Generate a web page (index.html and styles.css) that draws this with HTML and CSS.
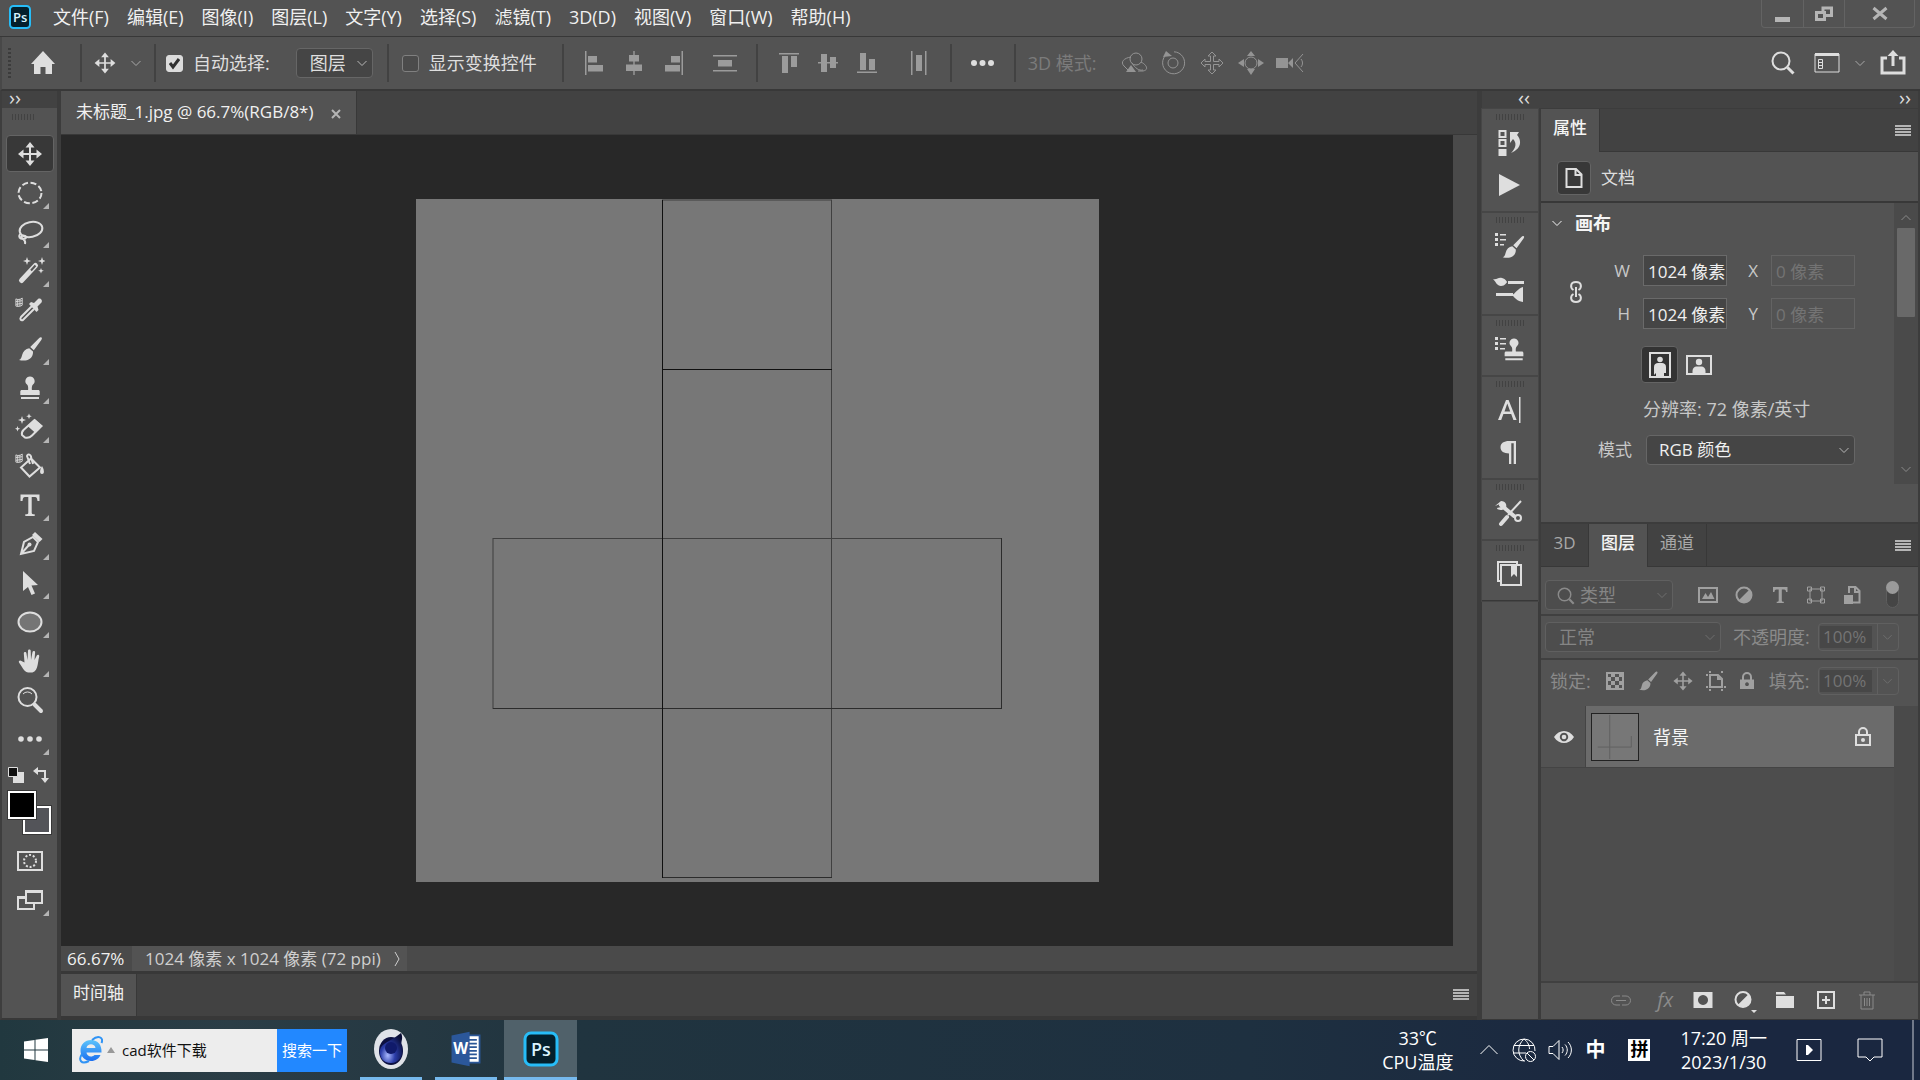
FILE: index.html
```html
<!DOCTYPE html>
<html lang="zh-CN">
<head>
<meta charset="utf-8">
<title>未标题_1.jpg @ 66.7%(RGB/8*)</title>
<link rel="stylesheet" href="styles.css">
</head>
<body>
<svg class="sprite" aria-hidden="true">
  <symbol id="move" viewBox="0 0 30 30"><path class="ln" d="M15 6v18M6 15h18"/><path d="M15 3l4.500 5.500h-9zM15 27l4.500-5.500h-9zM3 15l5.500-4.500v9zM27 15l-5.500-4.500v9z"/></symbol>
  <symbol id="down" viewBox="0 0 12 12"><path class="th" d="M1.500 4l4.500 4.500 4.500-4.500"/></symbol>
  <symbol id="brush" viewBox="0 0 30 30"><path d="M26.500 3.500c.8.500.3 1.700-.2 2.500l-7.500 10.300-3.600-3.200L24 4.200c.8-.8 1.800-1.200 2.500-.7zM14.200 14.200l3.800 3.400c.4 4.200-2.500 7.900-6.200 8.700-2.600.6-5.800.2-7.800-.3 2.200-.9 2.500-2.400 3.200-5.200.8-3.400 3.400-6 7-6.600z"/></symbol>
  <symbol id="stamp" viewBox="0 0 30 30"><path d="M15 3.500a4.600 4.600 0 0 0-3 8.100c1.300 1.300 1.300 3.400 1.100 5.400H7c-1.200 0-1.700.7-1.700 1.600V22h19.400v-3.400c0-.9-.5-1.600-1.700-1.600h-6.100c-.2-2-.2-4.100 1.100-5.400a4.600 4.600 0 0 0-3-8.100zM6 24h18v2H6z"/></symbol>
  <symbol id="menu" viewBox="0 0 16 12"><path d="M0 0h16v2H0zM0 3h16v2H0zM0 6h16v2H0zM0 9h16v2H0z"/></symbol>
  <symbol id="mag" viewBox="0 0 30 30"><circle class="ln" cx="13" cy="13" r="8.500"/><path class="ln3" d="M19.500 19.500l6 6"/></symbol>
  <symbol id="lock" viewBox="0 0 20 20"><path class="ln" d="M6 9V6a4 4 0 0 1 8 0v3"/><path fill-rule="evenodd" d="M3 8.500h14V18H3zM10 11.300a1.900 1.900 0 1 0 .01 0z"/></symbol>
  <symbol id="half" viewBox="0 0 20 20"><circle class="ln" cx="10" cy="10" r="7.500"/><path d="M15.500 4.500A7.800 7.800 0 0 1 4.500 15.500z"/></symbol>
  <symbol id="cube" viewBox="0 0 10 12"><path class="th" d="M1 2c2 1 5 1 7-1v8c-2 1.500-5 1.500-7 1zM1 5l7-1M1 8l7-1M3 2.500v8M5.500 2v8"/></symbol>
</svg>

<main class="app">
  <header class="menubar">
    <svg class="logo" viewBox="0 0 22 24"><rect x="1" y="1" width="20" height="22" rx="3.500"/><text x="4" y="17">Ps</text></svg>
    <nav class="menus">
      <button>文件(F)</button><button>编辑(E)</button><button>图像(I)</button><button>图层(L)</button><button>文字(Y)</button><button>选择(S)</button><button>滤镜(T)</button><button>3D(D)</button><button>视图(V)</button><button>窗口(W)</button><button>帮助(H)</button>
    </nav>
    <div class="winbtns">
      <button class="w1" aria-label="最小化"><svg viewBox="0 0 20 20"><path d="M2 13h15v5H2z"/></svg></button>
      <button class="w2" aria-label="还原"><svg viewBox="0 0 20 20"><path class="ln3" d="M2.500 8.500h8v7h-8zM9 8V4h8.500v7.500H12"/></svg></button>
      <button class="w3" aria-label="关闭"><svg viewBox="0 0 20 20"><path class="ln3" d="M3.500 4l13 11M16.500 4l-13 11"/></svg></button>
    </div>
  </header>

  <div class="options">
    <i class="vgrip"></i>
    <button class="home" aria-label="主页"><svg viewBox="0 0 26 26"><path d="M13 1L1 14h3v10h6.500v-7h5v7H22V14h3z"/></svg></button>
    <i class="sep"></i>
    <button class="curtool" aria-label="移动工具"><svg class="i26"><use href="#move"/></svg><svg class="i12 dim"><use href="#down"/></svg></button>
    <i class="sep"></i>
    <label class="opt o1"><input type="checkbox" class="cb" checked>自动选择:</label>
    <select class="sel lay" aria-label="自动选择"><option>图层</option></select>
    <i class="sep"></i>
    <label class="opt o2"><input type="checkbox" class="cb">显示变换控件</label>
    <i class="sep"></i>
    <div class="aligns">
      <svg viewBox="0 0 24 24"><path d="M2 0h1.500v24H2zM5 5h9v6.500H5zM5 14h15v6.500H5z"/></svg>
      <svg viewBox="0 0 24 24"><path d="M11.300 0h1.400v24h-1.400zM7 4h10v6.500H7zM4 13.500h16V20H4z"/></svg>
      <svg viewBox="0 0 24 24"><path d="M20.500 0H22v24h-1.500zM10 5h9v6.500h-9zM4 14h15v6.500H4z"/></svg>
      <svg class="apart" viewBox="0 0 24 24"><path d="M0 4h24v1.500H0zM5 9h14v6.500H5zM0 19h24v1.500H0z"/></svg>
    </div>
    <i class="sep"></i>
    <div class="aligns">
      <svg viewBox="0 0 24 24"><path d="M2 2h20v1.500H2zM5 5h6v17H5zM14 5h6v11h-6z"/></svg>
      <svg viewBox="0 0 24 24"><path d="M2 11h20v1.500H2zM5 3h6v18H5zM14 6h6v11h-6z"/></svg>
      <svg viewBox="0 0 24 24"><path d="M2 20.500h20V22H2zM5 2h6v17H5zM14 8h6v11h-6z"/></svg>
      <svg class="apart" viewBox="0 0 24 24"><path d="M4 0h1.500v24H4zM9 4h6v16H9zM18 0h1.500v24H18z"/></svg>
    </div>
    <i class="sep"></i>
    <button class="more" aria-label="更多"><svg viewBox="0 0 26 8"><circle cx="4" cy="4" r="3"/><circle cx="12.500" cy="4" r="3"/><circle cx="21" cy="4" r="3"/></svg></button>
    <i class="sep"></i>
    <div class="threed"><span>3D 模式:</span>
      <svg viewBox="0 0 28 24"><circle class="ln" cx="16" cy="8" r="6"/><path class="ln" d="M11 6C4 7 0 11 4 15l4 4M21 11c6 3 8 8 2 9h-5M12 12c3 5 7 8 11 7"/><path d="M6 21l5-7 5 7z"/></svg>
      <svg viewBox="0 0 28 24"><circle class="ln" cx="14" cy="12" r="5"/><path class="ln" d="M8 3a11 11 0 1 0 7-2.200"/><path d="M4 6l3-6 6 5z"/></svg>
      <svg viewBox="0 0 28 24"><path class="ln" d="M14 1l4 4h-2.500v5.500H21V8l4 4-4 4v-2.500h-5.500V19H18l-4 4-4-4h2.500v-5.500H7V16l-4-4 4-4v2.500h5.500V5H10z"/></svg>
      <svg viewBox="0 0 28 24"><circle class="ln" cx="14" cy="12" r="6"/><path d="M14 0l4 5h-8zM14 24l4-6h-8zM1 12l6-4v8zM27 12l-6-4v8z"/></svg>
      <svg viewBox="0 0 28 24"><path d="M0 7h12v10H0zM12 12l5-5v10z"/><path class="ln" d="M27 3l-8 9 8 9M25 8a6 6 0 0 1 0 8"/></svg>
    </div>
    <div class="right">
      <button aria-label="搜索"><svg class="i30"><use href="#mag"/></svg></button>
      <button aria-label="工作区"><svg class="wsp" viewBox="0 0 26 22"><path class="ln" d="M1 2h24v18H1zM4.500 7.500h4v9h-4zM4 10.500h5M4 13.500h5"/><path d="M1 1h24v3H1z"/></svg></button>
      <svg class="i12 dim"><use href="#down"/></svg>
      <button aria-label="共享"><svg class="share" viewBox="0 0 26 26"><path class="ln3" d="M7 8H2v15h22V8h-5M13 16V4"/><path d="M13 0l5.500 6h-11z"/></svg></button>
    </div>
  </div>

  <div class="work">
    <aside class="tools">
      <div class="strip">››</div>
      <i class="grip"></i>
      <button class="tool on" aria-label="移动"><svg><use href="#move"/></svg></button>
      <button class="tool more-t" aria-label="椭圆选框"><svg viewBox="0 0 30 30"><ellipse class="ln" cx="15" cy="15" rx="11.500" ry="10.300" stroke-dasharray="6 2.600"/></svg></button>
      <button class="tool more-t" aria-label="套索"><svg viewBox="0 0 30 30"><ellipse class="ln" cx="16" cy="12.500" rx="11.500" ry="7.500" transform="rotate(-12 16 12.500)"/><path class="ln" d="M5 17c-2 3 0 5 3 5s4-2 2-3-5 0-3 2 4 2 3 6"/></svg></button>
      <button class="tool more-t" aria-label="魔棒"><svg viewBox="0 0 30 30"><path class="wand" d="M6.500 24.500L20.500 9.500"/><path class="slot" d="M16 14.500l4.500-5"/><path d="M12 1l1 3 3 1-3 1-1 3-1-3-3-1 3-1zM27 1l1 3 2.500 1L28 6l-1 3-1-3-3-1 3-1zM26 12l.8 2 2 .8-2 .8-.8 2-.8-2-2-.8 2-.8z"/></svg></button>
      <button class="tool" aria-label="吸管"><svg viewBox="0 0 30 30"><use href="#cube" x="0" y="2" width="9" height="11"/><path class="ln" d="M17 11L6 22c-1.500 2 0 4 2 3l11-11"/><path d="M14 9l2-2 3 1 4-4c2-1.500 5 1 3.500 3.500l-4 4L23.500 15l-2 2z"/></svg></button>
      <button class="tool more-t" aria-label="画笔"><svg><use href="#brush"/></svg></button>
      <button class="tool more-t" aria-label="图章"><svg><use href="#stamp"/></svg></button>
      <button class="tool more-t" aria-label="橡皮擦"><svg viewBox="0 0 30 30"><path class="ln" d="M19.500 8l7 6-9.500 9.500c-2 2-5 2.500-7 2L7 23c-.5-2 0-3.500 1.500-5z"/><path d="M19.500 7l8 7-7 7-8-7zM7 4l1 3 3 1-3 1-1 3-1-3-3-1 3-1zM14 1.500l.8 2 2 .8-2 .8-.8 2-.8-2-2-.8 2-.8zM2.500 14l.7 2 2 .7-2 .7-.7 2-.7-2-2-.7 2-.7z"/></svg></button>
      <button class="tool" aria-label="油漆桶"><svg viewBox="0 0 30 30"><use href="#cube" x="0" y="2" width="9" height="11"/><path class="ln" d="M16 7.500l9 9-10.500 9L6 16.500zM15 13L12 5c1-3 4-1 4 1l2 7"/><path d="M27 15c2 3 3 8 0 8s-2-5 0-8z"/></svg></button>
      <button class="tool more-t" aria-label="文字"><svg viewBox="0 0 30 30"><path d="M5.500 4.500h19V11h-2c-.3-2.500-.8-4-2.500-4h-3.300v15.500c0 1.500.8 1.800 3 1.800v1.700h-9.400v-1.700c2.200 0 3-.3 3-1.800V7H10c-1.700 0-2.200 1.500-2.500 4h-2z"/></svg></button>
      <button class="tool more-t" aria-label="钢笔"><svg viewBox="0 0 30 30"><path class="ln" d="M6 25l3-12 9-5 5 5-4 9zM6 25l8-9"/><circle cx="14.500" cy="15.500" r="2"/><path d="M17 6l3-3 7.500 7-3 3z"/></svg></button>
      <button class="tool more-t" aria-label="路径选择"><svg viewBox="0 0 30 30"><path d="M8 3l15 14-6.500.5 3.500 8-3.500 1.500-3.500-8L8 23z"/></svg></button>
      <button class="tool more-t" aria-label="椭圆"><svg viewBox="0 0 30 30"><ellipse class="shape" cx="15" cy="15" rx="11.500" ry="9.500"/></svg></button>
      <button class="tool more-t" aria-label="抓手"><svg viewBox="0 0 30 30"><path d="M9.500 16.500L8.800 7.500c0-1.800 2.400-1.900 2.700-.1l1 6.600.5-9.300c.1-1.700 2.600-1.700 2.700 0L16 14l1.500-8c.4-1.600 2.700-1.300 2.600.4L19.500 14l2.300-4.500c.8-1.400 2.800-.6 2.400.9-1 4-1 7-2.200 11-1 3.500-3.500 5.200-7 5.200-4.500 0-6-2-8-5.500L4 16.500c-.8-1.700 1.200-2.700 2.500-1.500z"/></svg></button>
      <button class="tool" aria-label="缩放"><svg viewBox="0 0 30 30"><circle class="ln" cx="12.500" cy="12" r="9"/><path class="th" d="M8 9a6 6 0 0 1 9 0"/><path class="ln4" d="M19.500 19.500l6.500 6.500"/></svg></button>
      <button class="tool more-t" aria-label="编辑工具栏"><svg viewBox="0 0 30 30"><circle cx="6" cy="15" r="2.800"/><circle cx="15" cy="15" r="2.800"/><circle cx="24" cy="15" r="2.800"/></svg></button>
      <div class="minis">
        <button aria-label="默认颜色"><svg viewBox="0 0 18 18"><path d="M6 6h11v11H6z"/><path class="blk" d="M1.500 1.500h9v9h-9z"/></svg></button>
        <button aria-label="切换颜色"><svg viewBox="0 0 18 18"><path class="ln" d="M4 5h8v8"/><path d="M0 5l5-4v8zM12 17l4-5H8z"/></svg></button>
      </div>
      <div class="swatches"><button class="bg" aria-label="背景色"></button><button class="fg" aria-label="前景色"></button></div>
      <button class="tool" aria-label="快速蒙版"><svg viewBox="0 0 30 30"><path class="ln" d="M3 6h24v18H3z"/><circle class="ln" cx="15" cy="15" r="6" stroke-dasharray="2 1.800"/></svg></button>
      <button class="tool more-t" aria-label="屏幕模式"><svg viewBox="0 0 30 30"><path class="ln" d="M11 6h16v12H11zM11 12H3v12h16v-6"/><path d="M11 5h16v3H11zM3 11h8v3H3z"/></svg></button>
    </aside>

    <section class="doc">
      <div class="doctabs"><div class="doctab">未标题_1.jpg @ 66.7%(RGB/8*)<button aria-label="关闭文档"><svg viewBox="0 0 10 10"><path class="ln" d="M1 1l8 8M9 1l-8 8"/></svg></button></div></div>
      <div class="stage">
        <div class="canvas">
          <svg class="art" viewBox="0 0 683 683">
            <path stroke="#5a5a5a" stroke-width="2" d="M246 1h170M77 339v171"/>
            <path stroke="#404040" d="M77 339.500h509M415.500 1v678"/>
            <path stroke="#2c2c2c" d="M77 509.500h509M585.500 339v171M246 678.500h170"/>
            <path stroke="#101010" d="M246.500 1v678M246 170.500h170"/>
          </svg>
        </div>
        <div class="vscroll"></div>
      </div>
      <div class="status"><input class="zoom" value="66.67%" aria-label="缩放比例"><button class="info">1024 像素 x 1024 像素 (72 ppi)<svg viewBox="0 0 8 16"><path class="th" d="M2 1l4 7-4 7"/></svg></button></div>
      <div class="timeline"><button class="tl">时间轴</button><svg class="menu"><use href="#menu"/></svg></div>
    </section>

    <aside class="side">
      <div class="strip sidestrip"><span>‹‹</span><span>››</span></div>
      <div class="sidebody">
        <div class="dock">
          <div class="dg"><i class="grip"></i>
            <button aria-label="历史记录"><svg viewBox="0 0 34 30"><path class="ln" d="M6.500 3h6v6h-6zM6.500 12h6v6h-6z"/><path d="M5.500 21h8v7h-8zM17 4h9l-2 3c4 4 6 13-6 18 5-5 6-10 2-14l-3 4z"/></svg></button>
            <button aria-label="动作"><svg viewBox="0 0 34 30"><path d="M6 4l21 11L6 26z"/></svg></button></div>
          <div class="dg"><i class="grip"></i>
            <button aria-label="画笔设置"><svg viewBox="0 0 34 30"><path d="M2 2h3v3H2zM2 7h3v3H2zM2 12h3v3H2zM7 3h6v1.500H7zM7 8h6v1.500H7zM7 13h4v1.500H7z"/><use href="#brush" x="5" y="2" width="30" height="28"/></svg></button>
            <button aria-label="画笔"><svg viewBox="0 0 34 30"><path d="M15 8h16v3H15zM3 20h17v3H3zM0 6c4 1 5-2 9-1s5 4 5 4-2 4-6 4-5-4-8-7zM30 14v15c-6-1-8-4-11-7 4-2 5-6 11-8z"/></svg></button></div>
          <div class="dg"><i class="grip"></i>
            <button aria-label="仿制源"><svg viewBox="0 0 34 30"><path d="M2 3h3v3H2zM2 8h3v3H2zM2 13h3v3H2zM7 4h6v1.500H7zM7 9h6v1.500H7zM7 14h5v1.500H7z"/><use href="#stamp" x="6" y="1" width="30" height="29"/></svg></button></div>
          <div class="dg"><i class="grip"></i>
            <button aria-label="字符"><svg viewBox="0 0 34 30"><path fill-rule="evenodd" d="M5 25L13 5h2.600l8 20h-3.200l-2.200-6h-7.800l-2.200 6zM11.500 16.500h5.700L14.300 8.500z"/><path d="M26 2h1.500v26H26z"/></svg></button>
            <button aria-label="段落"><svg viewBox="0 0 34 30"><path d="M23 4v23h-2.300V6.200h-2.400V27H16V16.500c-5 0-8.500-2-8.500-6.200S11 4 16 4z"/></svg></button></div>
          <div class="dg"><i class="grip"></i>
            <button aria-label="工具预设"><svg viewBox="0 0 34 30"><path class="ln" d="M28 3L15 17"/><path class="ln4" d="M14 19l-6 7M8 7l13 11"/><circle class="ln" cx="25" cy="20" r="3"/><path d="M2 8l6-5c5 0 6 4 5 7l-4 2c-4 0-5-1-5-2l4-1V7L7 6z"/></svg></button></div>
          <div class="dg"><i class="grip"></i>
            <button aria-label="库"><svg viewBox="0 0 34 30"><path class="ln" d="M8 22H5V3h19v3M8 6h20v20H8z"/><path d="M18 6h6v12l-3-3-3 3z"/></svg></button></div>
        </div>

        <div class="panels">
          <section class="panel props">
            <div class="tabs"><button class="tab act">属性</button><svg class="menu"><use href="#menu"/></svg></div>
            <div class="dochead"><span class="docicon"><svg viewBox="0 0 18 20"><path class="ln" d="M1.500 1h9.500l5.500 5.500V19h-15zM10.500 1v6h6"/></svg></span>文档</div>
            <div class="propbody">
              <div class="propmain">
                <h2><svg viewBox="0 0 12 12"><use href="#down"/></svg>画布</h2>
                <div class="dims">
                  <svg class="chain" viewBox="0 0 14 22"><path class="ln" d="M4.500 9C1 7 1 1 7 1s6 6 2.500 8M4.500 13C1 15 1 21 7 21s6-6 2.500-8M7 6v10"/></svg>
                  <label for="w">W</label><input id="w" value="1024 像素"><label for="x">X</label><input id="x" value="0 像素" disabled>
                  <label for="h">H</label><input id="h" value="1024 像素"><label for="y">Y</label><input id="y" value="0 像素" disabled>
                </div>
                <div class="orient">
                  <button class="on" aria-label="纵向"><svg viewBox="0 0 22 26"><path class="ln" d="M1 1h20v24H1z"/><circle cx="11" cy="7.500" r="2.800"/><path d="M5 23v-8c0-3 2-4 4-4h4c2 0 4 1 4 4v6h-2v4H7v-4z"/></svg></button>
                  <button aria-label="横向"><svg viewBox="0 0 26 20"><path class="ln" d="M1 1h24v18H1z"/><circle cx="13" cy="7" r="3.200"/><path d="M6.500 18v-2c0-3 2-4.500 4-4.500h5c2 0 4 1.500 4 4.500v2z"/></svg></button>
                </div>
                <p class="res">分辨率: 72 像素/英寸</p>
                <div class="mode"><label for="mode">模式</label><select id="mode" class="sel"><option>RGB 颜色</option></select></div>
              </div>
              <div class="sbar"><svg class="up" viewBox="0 0 12 12"><use href="#down"/></svg><i></i><svg viewBox="0 0 12 12"><use href="#down"/></svg></div>
            </div>
          </section>

          <section class="panel layers">
            <div class="tabs"><button class="tab t3">3D</button><button class="tab act">图层</button><button class="tab">通道</button><svg class="menu"><use href="#menu"/></svg></div>
            <div class="row filter">
              <div class="kind"><svg><use href="#mag"/></svg><select class="sel off" aria-label="滤镜类型" disabled><option>类型</option></select></div>
              <div class="ficons">
                <svg viewBox="0 0 20 20"><path class="ln" d="M1 3h18v14H1z"/><path d="M4 14l3.500-6 2.500 4 3-5 3.500 7z"/></svg>
                <svg><use href="#half"/></svg>
                <svg viewBox="0 0 20 20"><path d="M3 2h14.500v5H16c0-1.500-.5-2.500-2-2.500h-2.200V15c0 1.500.5 1.700 2 1.700V18H6.700v-1.300c1.500 0 2-.2 2-1.700V4.500H6.500C5 4.500 4.500 5.500 4.500 7H3z"/></svg>
                <svg viewBox="0 0 20 20"><path class="th" d="M4 4h12v12H4zM1.500 2h4v4h-4zM14.500 2h4v4h-4zM1.500 14h4v4h-4zM14.500 14h4v4h-4z"/></svg>
                <svg viewBox="0 0 20 20"><path class="ln" d="M7 8V2h6.500l4 4v11.500H11M13 2v5h4.500"/><path d="M2 10h9v9H2z"/></svg>
              </div>
              <button class="toggle" aria-label="打开滤镜"></button>
            </div>
            <div class="row blend">
              <select class="sel off" aria-label="混合模式" disabled><option>正常</option></select>
              <label for="op">不透明度:</label><div class="pct"><input id="op" value="100%" disabled><svg><use href="#down"/></svg></div>
            </div>
            <div class="row locks">
              <span>锁定:</span>
              <div class="licons">
                <svg viewBox="0 0 20 20"><path class="ln" d="M2 2h16v16H2z"/><path d="M6 2h4v4H6zM14 2h4v4h-4zM2 6h4v4H2zM10 6h4v4h-4zM6 10h4v4H6zM14 10h4v4h-4zM2 14h4v4H2zM10 14h4v4h-4z"/></svg>
                <svg class="big"><use href="#brush"/></svg><svg class="big"><use href="#move"/></svg>
                <svg viewBox="0 0 20 20"><path class="ln" d="M4 4h8l4 4v8H4zM0 4h2M18 16h2M4 0v2M16 18v2M0 16h2M4 18v2M16 0v2"/><path d="M11 4v5h5z"/></svg>
                <svg><use href="#lock"/></svg>
              </div>
              <label for="fill">填充:</label><div class="pct"><input id="fill" value="100%" disabled><svg><use href="#down"/></svg></div>
            </div>
            <div class="list">
              <div class="items">
                <div class="layer">
                  <button class="eye" aria-label="可见性"><svg viewBox="0 0 20 12"><path fill-rule="evenodd" d="M0 6c5-8 15-8 20 0-5 8-15 8-20 0zM10 1.800a4.200 4.200 0 1 0 .01 0z"/><circle cx="10" cy="6" r="2.300"/></svg></button>
                  <div class="lbody"><svg class="thumb" viewBox="0 0 48 48"><path d="M18.500 1v46M6 34.500h35V23"/></svg><span>背景</span>
                    <svg class="lk" viewBox="0 0 18 20"><path class="ln" d="M5 8V5a4 4 0 0 1 8 0v3M2 8h14v10H2z"/><circle cx="9" cy="13" r="2"/></svg></div>
                </div>
              </div>
              <div class="track"></div>
            </div>
            <footer class="foot">
              <svg class="dis" viewBox="0 0 22 20"><path class="ln" d="M10 6H6a4.500 4.500 0 0 0 0 9h4M12 6h4a4.500 4.500 0 0 1 0 9h-4M6 10.500h10"/></svg>
              <span class="fx">fx</span>
              <svg viewBox="0 0 22 20"><path fill-rule="evenodd" d="M1.500 2h19v16h-19zM11 5a5 5 0 1 0 .01 0z"/></svg>
              <svg viewBox="0 0 22 20"><circle class="ln" cx="10" cy="9.500" r="7.500"/><path d="M15.500 4.200A7.600 7.600 0 0 1 4.700 15zM18 20h6l-3 3z"/></svg>
              <svg viewBox="0 0 22 20"><path d="M2 2h8l2 2.500H2zM2 6h18v12H2z"/></svg>
              <svg viewBox="0 0 22 20"><path class="ln" d="M3 2h16v16H3zM11 6v8M7 10h8"/></svg>
              <svg class="dis" viewBox="0 0 22 20"><path class="ln" d="M3 5h16M8 5V2h6v3M5 5v14h12V5M8.500 8v8M11 8v8M13.500 8v8"/></svg>
            </footer>
          </section>
        </div>
      </div>
    </aside>
  </div>
</main>

<footer class="taskbar">
  <button class="start" aria-label="开始"><svg viewBox="0 0 24 24"><path d="M0 3.500l10.500-1.500v9.500H0zM11.500 1.800L24 0v11.500H11.500zM0 12.500h10.500V22L0 20.500zM11.500 12.500H24V24l-12.500-1.800z"/></svg></button>
  <form class="search">
    <svg class="ie" viewBox="0 0 24 28"><defs><linearGradient id="ieg" x1="0" y1="0" x2="0" y2="1"><stop offset="0" stop-color="#5cc4fb"/><stop offset="1" stop-color="#1b6ff0"/></linearGradient></defs><path fill="url(#ieg)" fill-rule="evenodd" d="M12 4c-6 0-10.500 4.500-10.500 10.500S6 25 12 25c4.500 0 8-2.500 9.500-6h-6c-3 3-8 1-8-2.500H22.500C23 9 19 4 12 4zM7.500 12c.5-5 8.500-5 9 0z"/><path fill="none" stroke="#2f93f5" stroke-width="2" d="M13 4c6-5 12-3 9.500 3M3 18c-4 6-1 11 7 7"/></svg>
    <svg class="tri" viewBox="0 0 8 8"><path d="M4 1l4 6H0z"/></svg>
    <input value="cad软件下载" aria-label="搜索"><button type="button">搜索一下</button>
  </form>
  <button class="app-i c4d" aria-label="Cinema 4D"><svg viewBox="0 0 36 42"><defs><radialGradient id="c4g" cx=".35" cy=".75" r=".8"><stop offset="0" stop-color="#a9b8ff"/><stop offset=".4" stop-color="#2a3ca8"/><stop offset="1" stop-color="#070b33"/></radialGradient></defs><ellipse cx="18" cy="21" rx="17" ry="20" fill="#dfe2e8"/><ellipse cx="18" cy="23" rx="12" ry="14" fill="#0c1040"/><path fill="url(#c4g)" d="M28 5c3 6-1 8 1 14 2 8-3 16-11 16S6 29 7 22 17 14 28 5z"/><circle cx="18" cy="20" r="6" fill="#101a6a"/></svg></button>
  <button class="app-i word" aria-label="Word"><svg viewBox="0 0 36 42"><path fill="#fff" stroke="#2b5797" stroke-width="2" d="M18 6h15v30H18z"/><path stroke="#2b5797" stroke-width="2" d="M21 11h9M21 15h9M21 19h9M21 23h9M21 27h9M21 31h9"/><path fill="#2b579a" d="M2 6l20-4v38L2 36z"/><text x="4" y="27">W</text></svg></button>
  <button class="app-i ps" aria-label="Photoshop"><svg viewBox="0 0 36 36"><rect x="2" y="2" width="32" height="32" rx="6"/><text x="8" y="25">Ps</text></svg></button>
  <div class="tray">
    <div class="temp">33℃<br>CPU温度</div>
    <svg class="t1" viewBox="0 0 20 20"><path class="ln" d="M1.500 14L10 5.500l8.500 8.500"/></svg>
    <svg class="t2" viewBox="0 0 26 26"><path class="th" d="M14 24A11 11 0 1 1 24 14M13 2c-7 6-7 16 0 22M13 2c4 3 5.500 7 5.500 10M3 8.500h20M2 16h13"/><circle class="ln" cx="19.500" cy="19.500" r="5"/><path class="th" d="M16 16l7 7"/></svg>
    <svg class="t3i" viewBox="0 0 26 24"><path class="th" d="M2 8.500h4l6-6v19l-6-6H2zM15 9c1.500 2 1.500 4 0 6M18 6.500c3 3 3 8 0 11M21 4c4.500 4.500 4.500 11.500 0 16"/></svg>
    <span class="ime">中</span><span class="pin">拼</span>
    <time class="temp clock">17:20 周一<br>2023/1/30</time>
    <svg class="t4" viewBox="0 0 26 24"><path class="ln" d="M1 1.500h24v21H1z"/><path d="M10 7v10h2l5-5-5-5z"/></svg>
    <svg class="t5" viewBox="0 0 26 26"><path class="ln" d="M1 2h24v18h-8l-4 4-4-4H1z"/></svg>
    <button class="desk" aria-label="显示桌面"></button>
  </div>
</footer>
</body>
</html>
```
FILE: styles.css
```css
:root {
  --bg: #535353;
  --dark: #424242;
  --line: #383838;
  --field: #454545;
  --edge: #666;
  --ink: #dedede;
  --arrow: url("data:image/svg+xml,%3Csvg xmlns='http://www.w3.org/2000/svg' width='12' height='12'%3E%3Cpath d='M1.500 4l4.500 4.500 4.500-4.500' fill='none' stroke='%23b8b8b8'/%3E%3C/svg%3E");
  --arrow-off: url("data:image/svg+xml,%3Csvg xmlns='http://www.w3.org/2000/svg' width='12' height='12'%3E%3Cpath d='M1.500 4l4.500 4.500 4.500-4.500' fill='none' stroke='%236e6e6e'/%3E%3C/svg%3E");
}
* { box-sizing: border-box; }
body {
  margin: 0; height: 100vh; display: flex; flex-direction: column; overflow: hidden;
  background: var(--bg); color: var(--ink);
  font: 18px/24px "Open Sans", "Noto Sans CJK SC", sans-serif;
}
button, input, select { font: inherit; color: inherit; margin: 0; padding: 0; border: 0; background: none; border-radius: 0; }
button { display: flex; align-items: center; justify-content: center; white-space: nowrap; }
svg { display: block; fill: currentColor; flex: none; }
.sprite { display: none; }
.ln, .ln3, .ln4, .th { fill: none; stroke: currentColor; stroke-width: 2; }
.ln3 { stroke-width: 3; }
.ln4 { stroke-width: 4; stroke-linecap: round; }
.th { stroke-width: 1; }
.i12 { width: 12px; height: 12px; }
.i26 { width: 26px; height: 26px; }
.i30 { width: 30px; height: 30px; }
.dim { color: #a8a8a8; }

.app { flex: 1; min-height: 0; display: flex; flex-direction: column; }

.menubar { height: 37px; flex: none; display: flex; align-items: flex-start; border-bottom: 1px solid var(--line); }
.logo { width: 22px; height: 24px; margin: 5px 22px 0 9px; }
.logo rect, .ps rect { fill: #04202c; stroke: #27bdf8; stroke-width: 2; }
.logo text { font: 600 13px "Open Sans", sans-serif; fill: #d9f4ff; }
.menus { display: flex; gap: 18px; flex: 1; padding-top: 5px; color: #f0f0f0; }
.winbtns { display: flex; height: 28px; margin-right: 5px; border: 1px solid #636363; border-top: 0; border-radius: 0 0 4px 4px; color: #b5b5b5; }
.winbtns svg { width: 20px; height: 20px; }
.winbtns button + button { border-left: 1px solid #636363; }
.w1 { width: 41px; }
.w2 { width: 41px; }
.w3 { width: 70px; }

.options { height: 54px; flex: none; display: flex; align-items: center; border-bottom: 2px solid var(--line); border-left: 2px solid #484848; }
.vgrip { width: 3px; height: 30px; margin: 0 19px 0 6px; background: repeating-linear-gradient(#3c3c3c 0 2px, #535353 2px 4px); }
.home svg { width: 26px; height: 26px; }
.home { margin-right: 24px; }
.sep { width: 2px; height: 38px; background: #424242; flex: none; }
.curtool { gap: 12px; margin: 0 12px 0 10px; }
.opt { display: flex; align-items: center; gap: 10px; white-space: nowrap; }
.o1 { margin: 0 26px 0 10px; }
.o2 { margin: 0 25px 0 13px; }
.cb { appearance: none; width: 17px; height: 17px; border: 1px solid #808080; border-radius: 3px; background: #4b4b4b; }
.cb:checked { border-color: #dcdcdc; background: #dcdcdc url("data:image/svg+xml,%3Csvg xmlns='http://www.w3.org/2000/svg' width='15' height='15'%3E%3Cpath d='M3 7l3 4 6-8' fill='none' stroke='%23303030' stroke-width='3'/%3E%3C/svg%3E"); }
.sel { appearance: none; height: 30px; padding: 0 24px 0 13px; border: 1px solid var(--edge); border-radius: 4px; background: var(--field) var(--arrow) no-repeat right 4px center; line-height: 26px; }
.sel.off { background: #4d4d4d var(--arrow-off) no-repeat right 4px center; color: #858585; border-color: #606060; opacity: 1; }
.lay { width: 77px; margin-right: 14px; }
.aligns { display: flex; gap: 15px; margin: 0 19px; color: #9b9b9b; }
.aligns svg { width: 24px; height: 24px; }
.aligns .apart { margin-left: 13px; }
.more { margin: 0 18px; }
.more svg { width: 26px; height: 8px; }
.threed { display: flex; align-items: center; gap: 11px; margin-left: 12px; color: #949494; }
.threed span { margin-right: 12px; color: #7b7b7b; }
.threed svg { width: 28px; height: 24px; }
.threed .ln { stroke-width: 1; }
.right { margin-left: auto; display: flex; align-items: center; gap: 18px; padding-right: 14px; }
.wsp { width: 26px; height: 22px; }
.share { width: 26px; height: 26px; }
.wsp .ln { stroke-width: 1; }
.right .i30 { margin-right: -2px; }
.right .i12 { margin: 0 -4px; }

.work { flex: 1; min-height: 0; display: flex; background: #3c3c3c; }
.strip { height: 17px; margin-bottom: 1px; padding-left: 7px; background: var(--dark); line-height: 14px; font-size: 20px; flex: none; }
.grip { display: block; width: 28px; height: 6px; background: repeating-linear-gradient(90deg, #424242 0 1px, #535353 1px 3px); }
.tools { width: 58px; display: flex; flex-direction: column; background: var(--bg); border-left: 2px solid #3e3e3e; border-bottom: 2px solid var(--line); border-right: 1px solid #3c3c3c; }
.tools .grip { width: 24px; margin: 5px 0 15px 10px; }
.tool { position: relative; width: 48px; height: 37px; margin: 0 0 2px 4px; border-radius: 4px; flex: none; }
.tool svg { width: 30px; height: 30px; }
.tool.on { background: #383838; border: 1px solid #646464; }
.more-t::after { content: ""; position: absolute; right: 5px; bottom: 2px; border: 3px solid; border-color: transparent #b5b5b5 #b5b5b5 transparent; }
.wand { fill: none; stroke: currentColor; stroke-width: 5; stroke-linecap: round; }
.slot { fill: none; stroke: #535353; stroke-width: 2; }
.shape { fill: #757575; stroke: currentColor; stroke-width: 2; }
.blk { fill: #111; stroke: currentColor; stroke-width: 1; }
.minis { display: flex; gap: 8px; height: 31px; padding-left: 5px; align-items: center; }
.minis svg { width: 18px; height: 18px; }
.swatches { position: relative; height: 52px; flex: none; }
.swatches button { position: absolute; width: 28px; height: 28px; border: 2px solid #fff; outline: 1px solid #383838; }
.fg { left: 6px; top: 1px; background: #000; }
.bg { left: 21px; top: 16px; background: #535459; }

.doc { flex: 1; min-width: 0; display: flex; flex-direction: column; margin: 0 5px 0 3px; }
.doctabs { height: 44px; flex: none; display: flex; background: var(--dark); border-bottom: 1px solid var(--line); }
.doctab { display: flex; align-items: center; gap: 17px; padding: 0 15px 2px 15px; background: var(--bg); border-right: 1px solid var(--line); color: #f0f0f0; font-size: 17px; white-space: nowrap; }
.doctab svg { width: 10px; height: 10px; color: #b5b5b5; margin-top: 4px; }
.stage { flex: 1; min-height: 0; display: flex; }
.canvas { flex: 1; display: flex; align-items: center; justify-content: center; background: #282828; }
.art { width: 683px; height: 683px; background: #777; fill: none; }
.vscroll { width: 24px; background: #4a4a4a; }
.status { height: 25px; flex: none; display: flex; background: #4a4a4a; }
.zoom { width: 71px; padding-left: 6px; font-size: 17px; color: #f0f0f0; }
.info { padding: 0 6px 0 13px; gap: 12px; background: var(--bg); color: #cfcfcf; font-size: 17px; }
.info svg { width: 8px; height: 16px; }
.timeline { height: 49px; flex: none; display: flex; align-items: center; justify-content: space-between; padding-right: 8px; background: var(--dark); border-top: 3px solid #383838; border-bottom: 4px solid var(--line); }
.tl { align-self: stretch; width: 76px; padding-bottom: 5px; background: var(--bg); border-right: 1px solid var(--line); color: #f0f0f0; font-size: 17px; }
.menu { width: 16px; height: 12px; color: #b5b5b5; }

.side { width: 438px; flex: none; display: flex; flex-direction: column; padding-right: 2px; }
.sidestrip { display: flex; justify-content: space-between; padding: 0 7px 0 36px; }
.sidebody { flex: 1; min-height: 0; display: flex; }
.dock { width: 56px; margin-right: 3px; background: var(--bg); border-bottom: 1px solid var(--line); }
.dg { padding: 5px 0; border-bottom: 1px solid var(--line); outline: 1px solid #464646; }
.dg .grip { margin: 0 0 2px 14px; }
.dg button { width: 100%; height: 42px; }
.dg svg { width: 34px; height: 30px; }

.panels { flex: 1; min-width: 0; display: flex; flex-direction: column; }
.tabs { height: 43px; flex: none; display: flex; align-items: stretch; background: var(--dark); border-bottom: 1px solid var(--line); }
.tab { width: 59px; padding-bottom: 5px; border-right: 1px solid var(--line); color: #a8a8a8; font-size: 17px; }
.tab.act { margin-bottom: -1px; background: var(--bg); color: #f5f5f5; font-weight: 500; }
.t3 { width: 48px; }
.tabs .menu { margin: 16px 7px 0 auto; }
.props { height: 413px; display: flex; flex-direction: column; background: var(--bg); flex: none; }
.dochead { height: 51px; flex: none; display: flex; align-items: center; gap: 10px; padding: 2px 0 0 16px; border-bottom: 2px solid var(--line); font-size: 17px; }
.docicon { width: 34px; height: 34px; display: flex; align-items: center; justify-content: center; background: #383838; border: 1px solid #646464; border-radius: 4px; }
.docicon svg { width: 18px; height: 20px; }
.propbody { height: 281px; display: flex; }
.propmain { flex: 1; padding-top: 8px; }
h2 { display: flex; align-items: center; gap: 12px; margin: 0; padding-left: 10px; font-size: 18px; line-height: 24px; font-weight: 700; color: #f5f5f5; }
h2 svg { width: 12px; height: 12px; }
.dims { display: grid; grid-template-columns: 14px 60px 84px 44px 84px; grid-template-rows: 31px 31px; row-gap: 12px; margin: 20px 0 0 28px; align-items: center; font-size: 17px; }
.chain { grid-row: 1 / 3; width: 14px; height: 22px; }
.dims label { text-align: right; padding-right: 13px; color: #c8c8c8; }
.dims input { width: 84px; height: 31px; padding-left: 4px; border: 1px solid #6a6a6a; background: var(--field); color: #f0f0f0; }
.dims input:disabled { background: transparent; border-color: #636363; color: #747474; }
.orient { display: flex; gap: 8px; margin: 17px 0 0 100px; align-items: center; }
.orient button { height: 37px; }
.orient .on { width: 37px; border-radius: 4px; background: #333; border: 1px solid #646464; }
.orient svg { width: 26px; height: 20px; }
.orient .on svg { width: 22px; height: 26px; }
.res { margin: 13px 0 0 102px; color: #c8c8c8; font-size: 18px; line-height: 26px; }
.mode { display: flex; align-items: center; gap: 14px; margin: 13px 0 0 57px; color: #c8c8c8; font-size: 17px; }
.mode .sel { width: 209px; color: #f0f0f0; padding-left: 12px; }
.sbar { width: 24px; display: flex; flex-direction: column; align-items: center; padding: 9px 0; background: #4a4a4a; color: #8a8a8a; }
.sbar svg { width: 12px; height: 12px; }
.sbar .up { transform: rotate(180deg); }
.sbar i { width: 18px; height: 89px; margin: 4px 0 auto; background: #696969; border-radius: 1px; }

.layers { flex: 1; min-height: 0; display: flex; flex-direction: column; margin-top: 2px; background: var(--bg); border-bottom: 1px solid var(--line); }
.row { display: flex; align-items: center; flex: none; padding: 0 19px 0 4px; color: #8a8a8a; }
.filter { height: 49px; padding-top: 8px; border-bottom: 2px solid #404040; }
.kind { position: relative; }
.kind svg { position: absolute; left: 10px; top: 5px; width: 22px; height: 22px; }
.kind .ln { stroke-width: 3; }
.kind .sel { width: 128px; padding-left: 34px; }
.ficons { display: flex; gap: 16px; margin-left: 25px; color: #a0a0a0; }
.ficons svg { width: 20px; height: 20px; }
.toggle { position: relative; width: 13px; height: 27px; margin-left: 24px; border-radius: 7px; background: #454545; border: 1px solid #5e5e5e; }
.toggle::before { content: ""; position: absolute; top: -1px; left: -1px; width: 13px; height: 13px; border-radius: 50%; background: #9a9a9a; }
.blend { height: 44px; border-bottom: 2px solid #404040; }
.blend .sel { width: 176px; margin-right: 12px; }
.pct { display: flex; width: 81px; height: 28px; margin-left: auto; border: 1px solid #606060; border-radius: 4px; align-items: center; }
.pct input { width: 52px; height: 22px; padding-left: 3px; margin: 0 5px 0 1px; background: #474747; color: #747474; font-size: 17px; }
.pct svg { width: 20px; height: 26px; padding: 0 4px; color: #707070; border-left: 1px solid #606060; }
.locks { height: 46px; padding-left: 9px; padding-bottom: 4px; }
.licons { display: flex; gap: 11px; margin: 0 12px 0 14px; align-items: center; color: #a0a0a0; }
.licons svg { width: 20px; height: 20px; }
.licons .big { width: 24px; height: 24px; }
.list { flex: 1; min-height: 0; display: flex; background: #4d4d4d; }
.items { flex: 1; }
.track { width: 24px; background: #4a4a4a; }
.layer { height: 62px; display: flex; border-bottom: 1px solid #444; background: var(--bg); }
.eye { width: 45px; border-right: 1px solid #444; padding-left: 2px; }
.eye svg { width: 20px; height: 12px; }
.lbody { flex: 1; display: flex; align-items: center; padding: 0 22px 0 5px; background: #6b6b6b; color: #f5f5f5; }
.lbody span { flex: 1; margin-left: 14px; }
.thumb { width: 48px; height: 48px; border: 1px solid #222; background: #777; fill: none; stroke: #606060; }
.lk { width: 18px; height: 20px; color: #dedede; }
.foot { height: 38px; flex: none; display: flex; align-items: center; justify-content: flex-end; gap: 19px; padding: 0 40px 3px 0; border-top: 2px solid #404040; }
.foot svg { width: 22px; height: 20px; overflow: visible; }
.foot .dis, .fx { color: #8a8a8a; }
.foot .dis .ln { stroke-width: 1; }
.fx { width: 22px; font-style: italic; font-size: 20px; line-height: 24px; text-align: right; }

.taskbar { height: 60px; flex: none; display: flex; align-items: center; background: linear-gradient(90deg, #21383f, #2b3d46 12%, #20343f 30%, #1e3040 65%, #1a2740 85%); color: #fff; }
.start { margin: 0 24px; }
.start svg { width: 24px; height: 24px; }
.search { display: flex; align-items: center; width: 275px; height: 43px; margin: 0; background: #ededed; color: #111; font-size: 15px; }
.ie { width: 24px; height: 28px; margin-left: 7px; }
.tri { width: 8px; height: 8px; margin: 0 7px 0 4px; color: #999; }
.search input { flex: 1; min-width: 0; }
.search button { width: 70px; height: 43px; background: #2288ff; color: #fff; }
.app-i { height: 60px; width: 62px; border-bottom: 3px solid #76b9ed; }
.app-i svg { width: 36px; height: 42px; }
.c4d { margin-left: 13px; }
.word { margin: 0 7px 0 13px; }
.word text { font: 700 17px "Open Sans", sans-serif; fill: #fff; }
.word svg { height: 38px; }
.ps { width: 73px; background: #50616a; }
.ps svg { height: 36px; }
.ps rect { stroke-width: 3; }
.ps text { font: 600 18px "Open Sans", sans-serif; fill: #d9f4ff; }
.tray { margin-left: auto; display: flex; align-items: center; height: 60px; }
.temp { text-align: center; line-height: 24px; white-space: nowrap; }
.t1 { width: 20px; height: 20px; margin: 0 12px 0 26px; }
.t1 .ln, .t4 .ln, .t5 .ln, .t2 .ln { stroke-width: 1; }
.t2 { width: 26px; height: 26px; }
.t3i { width: 26px; height: 24px; margin: 0 12px 0 10px; }
.ime { font-size: 20px; font-weight: 700; }
.pin { width: 22px; height: 22px; margin: 0 30px 0 23px; background: #fff; color: #000; text-align: center; font-weight: 700; line-height: 20px; }
.t4 { width: 26px; height: 24px; margin: 0 35px 0 29px; }
.t5 { width: 26px; height: 26px; margin-right: 29px; }
.desk { width: 8px; height: 60px; border-left: 2px solid #71798a; }
```
